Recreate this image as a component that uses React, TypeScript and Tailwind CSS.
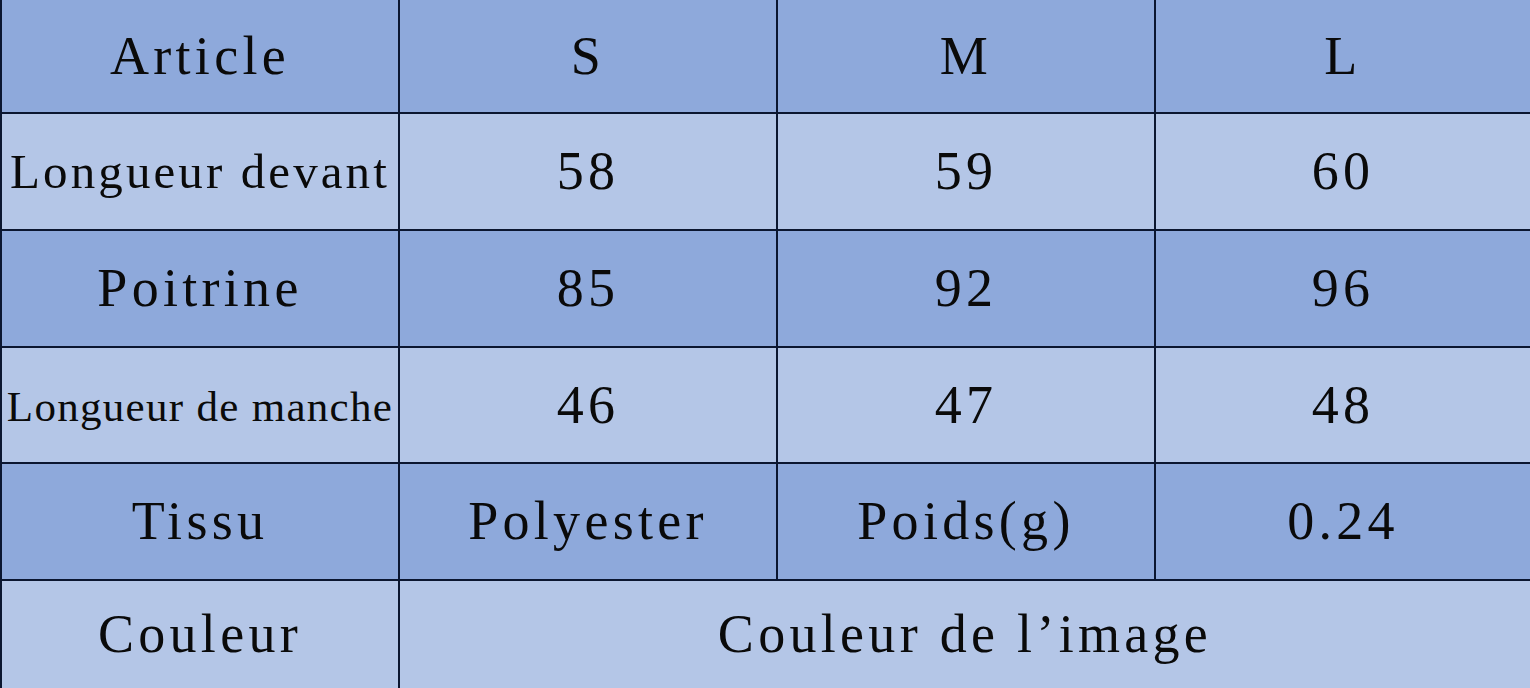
const dark = "bg-[#8ea9db]";
const light = "bg-[#b4c6e7]";
const normalText = "text-[54px] tracking-[4.3px]";

type Row = {
  label: string;
  labelText?: string;
  cells: string[];
  tone: string;
  height: string;
};

const rows: Row[] = [
  { label: "Article", cells: ["S", "M", "L"], tone: dark, height: "h-[114px]" },
  {
    label: "Longueur devant",
    labelText: "text-[49px] tracking-[3.1px]",
    cells: ["58", "59", "60"],
    tone: light,
    height: "h-[117px]",
  },
  { label: "Poitrine", cells: ["85", "92", "96"], tone: dark, height: "h-[117px]" },
  {
    label: "Longueur de manche",
    labelText: "text-[43px] tracking-[1.3px] pt-[4px]",
    cells: ["46", "47", "48"],
    tone: light,
    height: "h-[116px]",
  },
  { label: "Tissu", cells: ["Polyester", "Poids(g)", "0.24"], tone: dark, height: "h-[117px]" },
];

function Cell({
  children,
  className = "",
  text = normalText,
}: {
  children: React.ReactNode;
  className?: string;
  text?: string;
}) {
  return (
    <div
      className={`flex items-center justify-center whitespace-nowrap border-[#0b1630] text-[#0a0a0a] ${text} ${className}`}
    >
      {children}
    </div>
  );
}

export default function App() {
  return (
    <div
      className="h-[688px] w-[1530px] overflow-hidden bg-[#b4c6e7]"
      style={{ fontFamily: '"Liberation Serif", "Times New Roman", serif' }}
    >
      <div className="grid grid-cols-[400px_378px_378px_374px]">
        {rows.map((row) => (
          <div key={row.label} className={`col-span-4 grid grid-cols-subgrid ${row.height} ${row.tone}`}>
            <Cell className="border-b-2 border-l-2 border-r-2" text={row.labelText ?? normalText}>
              {row.label}
            </Cell>
            <Cell className="border-b-2 border-r-2">{row.cells[0]}</Cell>
            <Cell className="border-b-2 border-r-2">{row.cells[1]}</Cell>
            <Cell className="border-b-2">{row.cells[2]}</Cell>
          </div>
        ))}
        <div className={`col-span-4 grid h-[120px] grid-cols-subgrid ${light}`}>
          <Cell className="border-l-2 border-r-2 pb-[14px]">Couleur</Cell>
          <Cell className="col-span-3 pb-[14px]">Couleur de l’image</Cell>
        </div>
      </div>
    </div>
  );
}
